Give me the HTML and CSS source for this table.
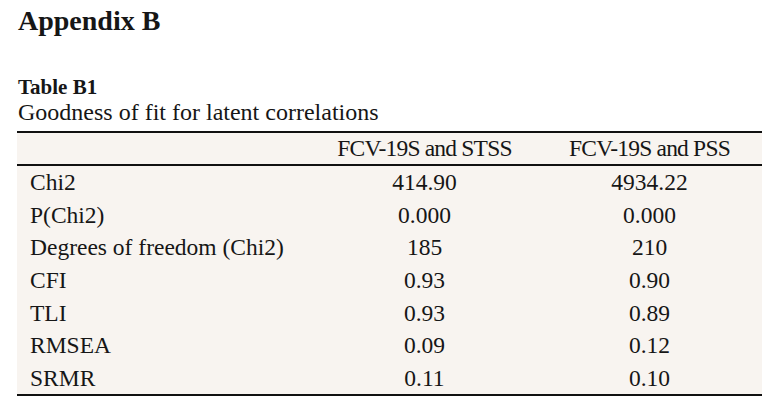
FILE: index.html
```html
<!DOCTYPE html>
<html>
<head>
<meta charset="utf-8">
<link rel="stylesheet" href="styles.css">
</head>
<body>
<div class="page">
  <h1 class="title">Appendix B</h1>
  <div class="caption">
    <div class="label">Table B1</div>
    <div class="desc">Goodness of fit for latent correlations</div>
  </div>
  <table class="tbl">
    <thead>
      <tr><th class="c1"></th><th>FCV-19S and STSS</th><th>FCV-19S and PSS</th></tr>
    </thead>
    <tbody>
      <tr><td class="c1">Chi2</td><td>414.90</td><td>4934.22</td></tr>
      <tr><td class="c1">P(Chi2)</td><td>0.000</td><td>0.000</td></tr>
      <tr><td class="c1">Degrees of freedom (Chi2)</td><td>185</td><td>210</td></tr>
      <tr><td class="c1">CFI</td><td>0.93</td><td>0.90</td></tr>
      <tr><td class="c1">TLI</td><td>0.93</td><td>0.89</td></tr>
      <tr><td class="c1">RMSEA</td><td>0.09</td><td>0.12</td></tr>
      <tr><td class="c1">SRMR</td><td>0.11</td><td>0.10</td></tr>
    </tbody>
  </table>
</div>
</body>
</html>
```

FILE: styles.css
```css
html, body {
  margin: 0;
  padding: 0;
  background: #ffffff;
}
.page {
  padding: 4px 22px 0 17px;
  font-family: "Liberation Serif", "Times New Roman", serif;
  color: #161616;
}
.title {
  margin: 0 0 0 1px;
  font-size: 28px;
  line-height: 34px;
  font-weight: bold;
}
.caption {
  margin-top: 37px;
  padding-left: 1px;
}
.label {
  font-weight: bold;
  font-size: 21px;
  line-height: 24px;
}
.desc {
  font-size: 24px;
  line-height: 26px;
}
.tbl {
  margin-top: 6px;
  width: 745px;
  border-collapse: collapse;
  background: #f8f4f0;
  font-size: 23.5px;
  table-layout: fixed;
  border-top: 2px solid #111;
  border-bottom: 2px solid #111;
}
.tbl thead tr {
  border-bottom: 2px solid #111;
}
.tbl th, .tbl td {
  font-weight: normal;
  text-align: center;
  padding: 0;
  white-space: nowrap;
}
.tbl th {
  height: 31px;
  letter-spacing: -0.8px;
}
.tbl td {
  height: 31.6px;
  padding-top: 1px;
}
.tbl .c1 {
  width: 282px;
  text-align: left;
  padding-left: 13px;
}
```
